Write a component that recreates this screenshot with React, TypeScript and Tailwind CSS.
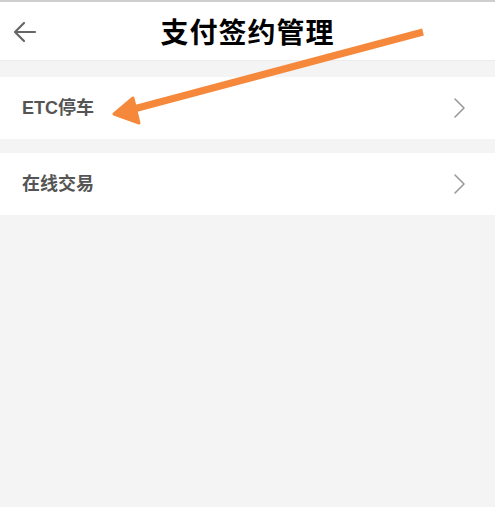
import React from "react";

function Chevron() {
  return (
    <svg width="14" height="22" viewBox="0 0 14 22" fill="none">
      <path d="M2 2 L11 11 L2 20" stroke="#9a9a9a" strokeWidth="1.6" strokeLinecap="round" strokeLinejoin="round" />
    </svg>
  );
}

function Row({ label }: { label: string }) {
  return (
    <div className="flex h-[62px] items-center justify-between bg-white pl-[22px] pr-[28px]">
      <span
        className="text-[18px] font-semibold text-[#555555]"
        style={{ fontFamily: '"Liberation Sans", "Noto Sans CJK SC", sans-serif' }}
      >
        {label}
      </span>
      <Chevron />
    </div>
  );
}

export default function App() {
  return (
    <div className="relative h-[507px] w-[495px] overflow-hidden bg-[#f4f4f4]">
      <div className="h-[2px] bg-[#cfcfcf]" />
      <div className="relative flex h-[59px] items-center justify-center border-b border-[#ececec] bg-white">
        <svg className="absolute left-[13px] top-[19px]" width="24" height="22" viewBox="0 0 24 22" fill="none">
          <path d="M22 11 H3 M11 2 L2 11 L11 20" stroke="#666" strokeWidth="2.2" strokeLinecap="round" strokeLinejoin="round" />
        </svg>
        <span
          className="text-[28px] font-semibold tracking-[1px] text-black"
          style={{ fontFamily: '"Noto Sans CJK SC", serif' }}
        >
          支付签约管理
        </span>
      </div>
      <div className="mt-[16px]">
        <Row label="ETC停车" />
      </div>
      <div className="mt-[14px]">
        <Row label="在线交易" />
      </div>
      <svg className="pointer-events-none absolute left-0 top-0" width="495" height="507" viewBox="0 0 495 507">
        <path d="M423 32 L130 110" stroke="#f5883a" strokeWidth="7" strokeLinecap="butt" />
        <path d="M114 114 L133 98 L139 123 Z" fill="#f5883a" stroke="#f5883a" strokeWidth="3" strokeLinejoin="round" />
      </svg>
    </div>
  );
}
